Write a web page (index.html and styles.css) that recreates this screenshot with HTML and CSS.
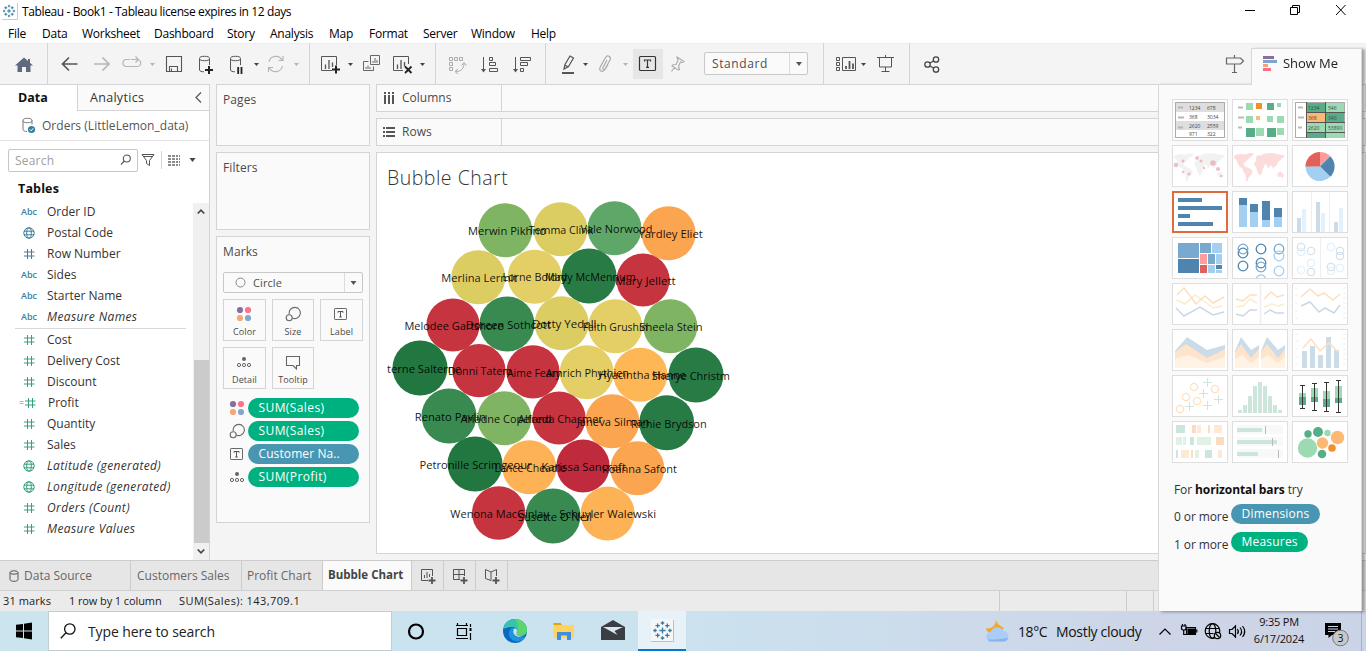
FILE: index.html
```html
<!DOCTYPE html>
<html lang="en">
<head>
<meta charset="utf-8">
<title>Tableau - Book1</title>
<link rel="stylesheet" href="styles.css">
</head>
<body>
<svg class="defs" width="0" height="0">
  <symbol id="hash" viewBox="0 0 14 12"><path d="M4.5 1v10M8.5 1v10M1 4h10.5M1 8h10.5" fill="none" stroke="currentColor"/></symbol>
  <symbol id="globe" viewBox="0 0 14 12"><g fill="none" stroke="currentColor"><circle cx="6" cy="6" r="5.2"/><ellipse cx="6" cy="6" rx="2.3" ry="5.2"/><path d="M1 4.2h10M1 7.8h10"/></g></symbol>
  <symbol id="drop" viewBox="0 0 6 4"><path d="M0 0h6L3 4z" fill="currentColor"/></symbol>
  <symbol id="dots4" viewBox="0 0 16 16"><circle cx="4" cy="4" r="3.1" fill="#8a7099"/><circle cx="12" cy="4" r="3.1" fill="#fb7586"/><circle cx="4" cy="12" r="3.1" fill="#f3a878"/><circle cx="12" cy="12" r="3.1" fill="#84a6cd"/></symbol>
  <symbol id="size" viewBox="0 0 16 16"><g fill="none" stroke="#6a6a6a" stroke-width="1.1"><path d="M4.3 8.2A5.6 5.6 0 1 1 7.3 12"/><circle cx="4.2" cy="11.8" r="3"/></g></symbol>
  <symbol id="label" viewBox="0 0 16 16"><rect x="1.5" y="2.5" width="12" height="11" rx=".6" fill="none" stroke="#6a6a6a"/><path d="M5 6.8V5.5h5v1.3M7.5 5.5v5.500M6.200 11h2.600" fill="none" stroke="#555"/></symbol>
  <symbol id="detail" viewBox="0 0 16 16"><circle cx="8" cy="5" r="2" fill="#666"/><g fill="none" stroke="#666"><circle cx="3" cy="11" r="1.6"/><circle cx="8" cy="11" r="1.600"/><circle cx="13" cy="11" r="1.600"/></g></symbol>
  <symbol id="logo" viewBox="0 0 24 24"><path d="M12 8.500v7M8.500 12h7M12 1.500v4M10 3.500h4M12 18.500v4M10 20.500h4M3.500 10v4M1.500 12h4M20.500 10v4M18.500 12h4M6.500 4v5M4 6.500h5M17.500 4v5M15 6.500h5M6.500 15v5M4 17.500h5M17.500 15v5M15 17.500h5" fill="none" stroke="currentColor" stroke-width="1.500"/></symbol>
  <symbol id="world" viewBox="0 0 50 28"><path d="M1 2l5-1 5 .5 4-1.500 4 .5-1 2-3 2-2 2-2 2-2 2 1 2 2 1 4 2 2 2-1 3-3 3-1 4-1.500-.5-.5-6-2-3-1-3-3-2-2-4-1-3-2-1-2 1zM21 4l2-2 2 .500 5-2 6-.500 6 1 6 1.500 1 1-3 1.500-1 2-2 1-2 4-2 1-1 3-1-3-2-1-2 3-2-4-3 0 1.500 1-2 4-1 4-2 2-2-4-1-4-2-2 0-3 2-1-.500-2zM42 19l3-1 3 3-1 3-2-1-3 0z" fill="currentColor"/></symbol>
</svg>

<header class="titlebar">
  <svg class="app-icon" width="16" height="18" viewBox="0 0 16 18"><path d="M0 17.500h15.500V1" fill="none" stroke="#ccc"/><g color="#1f6f9f"><use href="#logo" x="0" y="2" width="14" height="14"/></g></svg>
  <span class="window-title">Tableau - Book1 - Tableau license expires in 12 days</span>
  <svg class="window-buttons" width="130" height="24" viewBox="1236 0 130 24" fill="none" stroke="#000"><path d="M1245 10.500h10M1336 5l9.500 10M1345.500 5l-9.500 10"/><path d="M1290.500 7.500h7v7h-7zM1292.500 7.500v-2h7v7h-2"/></svg>
</header>

<nav class="menubar">
  <span class="m-file">File</span><span class="m-data">Data</span><span class="m-ws">Worksheet</span><span class="m-db">Dashboard</span><span class="m-story">Story</span><span class="m-an">Analysis</span><span class="m-map">Map</span><span class="m-fmt">Format</span><span class="m-srv">Server</span><span class="m-win">Window</span><span class="m-help">Help</span>
</nav>

<div class="toolbar">
  <div class="tools tools-home">
    <svg width="47" height="41" viewBox="0 43 47 41"><path d="M24 57.500l-9 8h2.500V72h4.500v-5h4v5h4.500v-6.500H33l-3-2.700V59h-2v2z" fill="#5f6a7d"/></svg>
  </div>
  <div class="tools tools-history">
    <svg width="261" height="41" viewBox="48 43 261 41" fill="none">
      <path d="M77.500 64H63M69 57.500L62.500 64l6.500 6.500" stroke="#555" stroke-width="1.700"/>
      <path d="M94 64h14.500M102.500 57.500L109 64l-6.500 6.500" stroke="#b5b5b5" stroke-width="1.700"/>
      <path d="M130 59.500h-3.500a3.500 3.500 0 0 0 0 7h11a3.500 3.500 0 0 0 2-6.200M131 59.500h7M135.500 56.500l3 3-3 3" stroke="#b5b5b5" stroke-width="1.200"/>
      <path d="M150 63h5l-2.500 3zM294 63h5l-2.500 3z" fill="#b5b5b5"/>
      <path d="M166.500 56.500h15v15h-15zM169.500 71v-4.500h8V71M171.500 71v-2.500" stroke="#555" stroke-width="1.100"/>
      <path d="M199.500 59v11c0 1 2 1.800 4.500 1.800M209.500 59v6" stroke="#555"/><ellipse cx="204.500" cy="58.500" rx="5" ry="2.200" stroke="#555"/><path d="M209 66v8M205 70h8" stroke="#222" stroke-width="2"/>
      <path d="M230.500 59v11c0 1 2 1.800 4.500 1.800M240.500 59v6" stroke="#555"/><ellipse cx="235.500" cy="58.500" rx="5" ry="2.200" stroke="#555"/><path d="M238.200 67v7M241.500 67v7" stroke="#222" stroke-width="1.800"/>
      <path d="M254 63h5l-2.500 3z" fill="#444"/>
      <path d="M269 62a7 7 0 0 1 13-2M282.500 66a7 7 0 0 1-13 2M283 56v4.500h-4.500M268.500 72v-4.500h4.500" stroke="#b5b5b5" stroke-width="1.200"/>
    </svg>
  </div>
  <div class="tools tools-sheet">
    <svg width="125" height="41" viewBox="310 43 125 41" fill="none">
      <g stroke="#555"><path d="M332 70.500h-10.500v-14h15V65"/><path d="M325.500 64.500V69M329 60v9M332.500 62.500V67" stroke-width="1.300"/></g>
      <path d="M336 65.500v8M332 69.500h8" stroke="#222" stroke-width="2"/>
      <path d="M348 63h5l-2.500 3zM420 63h5l-2.500 3z" fill="#444"/>
      <g stroke="#666"><path d="M370.500 55.500h9v9h-9zM368.500 61.500h-5v9h10v-4"/><path d="M373 61v2M375 58v5M377 60v3M366 67v2M368 65.500V69M370 67v2"/></g>
      <g stroke="#555"><path d="M403 70.500h-9.500v-14h15V64"/><path d="M397.500 64.500V69M401 60v9M404.500 62v4.500" stroke-width="1.300"/></g>
      <path d="M405 66.500l6.500 6.500M411.500 66.500L405 73" stroke="#222" stroke-width="1.800"/>
    </svg>
  </div>
  <div class="tools tools-sort">
    <svg width="109" height="41" viewBox="436 43 109 41" fill="none">
      <g stroke="#aaa"><path d="M449.500 57.500h3v3h-3zM454.500 57.500h3v3h-3zM459.500 57.500h3v3h-3zM449.500 62.500h3v3h-3zM449.500 67.500h3v3h-3zM456 71.500c5 0 8-3 8-8M458 69l-3 2.500 3 2.500M461.500 65.500l2.500-3 2.500 3"/></g>
      <g stroke="#555"><path d="M483.500 57v13M489.500 57.500h3v3h-3zM489.500 62.500h6v3h-6zM489.500 68.500h8v3h-8z"/><path d="M481 69h5l-2.500 3.500z" fill="#555" stroke="none"/>
      <path d="M515.500 57v13M520.500 57.500h10v3h-10zM520.500 62.500h7v3h-7zM520.500 68.500h3v3h-3z"/><path d="M513 69h5l-2.500 3.500z" fill="#555" stroke="none"/></g>
    </svg>
  </div>
  <div class="tools tools-format">
    <svg width="87" height="41" viewBox="546 43 87 41" fill="none">
      <path d="M564 69l1-4.500 5-8.500 3.500 2-5 8.500zM564.800 65l3.500 2" stroke="#555" stroke-width="1.200"/><path d="M562 73h12" stroke="#555" stroke-width="2"/>
      <path d="M583 63h5l-2.500 3z" fill="#444"/><path d="M623 63h5l-2.500 3z" fill="#b5b5b5"/>
      <path d="M607 60l-4 7.500c-1 2 1 3 2 1.500l5-9c1.500-3.500-2.500-5.500-4.500-2.500l-5 9c-2.500 4.500 2 6.500 4.500 3l3-5" stroke="#aaa" stroke-width="1.200"/>
    </svg>
    <span class="tool-active"><svg width="30" height="30" viewBox="633 49 30 30" fill="none" stroke="#333"><rect x="639.500" y="56.500" width="16" height="14" rx="1" stroke-width="1.200"/><path d="M644.500 61.500V60h6v1.500M647.500 60v7M646 67.300h3" stroke-width="1.200"/></svg></span>
    <svg width="41" height="41" viewBox="663 43 41 41" fill="none" stroke="#aaa"><path d="M677 57l7 4.500-1.500 1-2-.5-2 4 1 3.500-1 .7-6.500-4.200 1-1.200 3-.3 2-4zM674.500 67.500l-3 4" stroke-width="1.100"/></svg>
    <div class="select fit-select"><span>Standard</span><i><svg width="6" height="4"><use href="#drop"/></svg></i></div>
  </div>
  <div class="tools tools-present">
    <svg width="85" height="41" viewBox="824 43 85 41" fill="none" stroke="#555"><path d="M836.500 57.500h3v3h-3zM836.500 62.500h3v3h-3zM836.500 67.500h3v3h-3zM842.500 57.500h13v13h-13z"/><path d="M846 66v3M849.500 61v8M853 63.500V69" stroke-width="1.800"/><path d="M861 63h5l-2.500 3z" fill="#444" stroke="none"/><path d="M877 57.500h17M879.500 58v9h12v-9M885.500 67v5M881.500 71.500h8M885.500 55v2"/></svg>
  </div>
  <div class="tools tools-share">
    <svg width="40" height="41" viewBox="910 43 40 41" fill="none" stroke="#444" stroke-width="1.300"><circle cx="927.500" cy="64.500" r="2.700"/><circle cx="936" cy="59.500" r="2.700"/><circle cx="936" cy="69.500" r="2.700"/><path d="M930 63l3.500-2M930 66l3.500 2"/></svg>
  </div>
  <svg class="guide" width="30" height="41" viewBox="1221 43 30 41" fill="none" stroke="#666" stroke-width="1.200"><path d="M1226.500 58h14l3 3-3 3h-14zM1234.500 55v3M1234.500 64v8.500M1232 72.500h5"/></svg>
</div>

<main class="workspace">
  <aside class="data-pane">
    <div class="pane-tabs"><b>Data</b><span>Analytics<svg width="7" height="11" viewBox="0 0 7 11"><path d="M6 .5L1 5.500l5 5" fill="none" stroke="#555" stroke-width="1.200"/></svg></span></div>
    <div class="source"><svg width="14" height="17" viewBox="0 0 14 17" fill="none" stroke="#777"><ellipse cx="5.500" cy="3.500" rx="4.500" ry="2.200"/><path d="M1 3.500v9c0 1.200 2 2 4 2M10 3.500v4"/><circle cx="9.500" cy="12.500" r="3.600" fill="#3b7f9f" stroke="none"/><path d="M7.800 12.500l1.300 1.300 2.200-2.500" stroke="#fff"/></svg><span>Orders (LittleLemon_data)</span></div>
    <div class="search-row">
      <div class="search"><span>Search</span><svg width="12" height="12" viewBox="0 0 12 12" fill="none" stroke="#555" stroke-width="1.100"><circle cx="6.800" cy="4.500" r="3.500"/><path d="M4.300 7L1 10.500"/></svg></div>
      <svg width="14" height="14" viewBox="0 0 14 14" fill="none" stroke="#555"><path d="M1 1.500h12L8.500 7.500v5l-3-2v-3zM2.500 3.500h9"/></svg>
      <i class="rule"></i>
      <svg class="listicon" width="12" height="11" viewBox="0 0 12 11"><path d="M0 1h12M0 4h12M0 7h12M0 10h12" stroke="#666" stroke-width="1.300" stroke-dasharray="3 1 3 1 2 1 1"/></svg>
      <svg width="7" height="4"><use href="#drop" color="#444"/></svg>
    </div>
    <h2 class="tables">Tables</h2>
    <div class="fields">
      <ul class="dims">
        <li><em>Abc</em><span>Order ID</span></li>
        <li><svg><use href="#globe"/></svg><span>Postal Code</span></li>
        <li><svg><use href="#hash"/></svg><span>Row Number</span></li>
        <li><em>Abc</em><span>Sides</span></li>
        <li><em>Abc</em><span>Starter Name</span></li>
        <li class="gen"><em>Abc</em><span>Measure Names</span></li>
      </ul>
      <ul class="meas">
        <li><svg><use href="#hash"/></svg><span>Cost</span></li>
        <li><svg><use href="#hash"/></svg><span>Delivery Cost</span></li>
        <li><svg><use href="#hash"/></svg><span>Discount</span></li>
        <li class="calc"><svg><use href="#hash"/></svg><span>Profit</span></li>
        <li><svg><use href="#hash"/></svg><span>Quantity</span></li>
        <li><svg><use href="#hash"/></svg><span>Sales</span></li>
        <li class="gen"><svg><use href="#globe"/></svg><span>Latitude (generated)</span></li>
        <li class="gen"><svg><use href="#globe"/></svg><span>Longitude (generated)</span></li>
        <li class="gen"><svg><use href="#hash"/></svg><span>Orders (Count)</span></li>
        <li class="gen"><svg><use href="#hash"/></svg><span>Measure Values</span></li>
      </ul>
      <div class="scrollbar"><svg width="8" height="5" viewBox="0 0 8 5"><path d="M.7 4.500L4 1.200l3.300 3.300" fill="none" stroke="#444" stroke-width="1.600"/></svg><i></i><svg width="8" height="5" viewBox="0 0 8 5"><path d="M.7.500L4 3.800 7.300.5" fill="none" stroke="#444" stroke-width="1.600"/></svg></div>
    </div>
  </aside>

  <section class="cards">
    <div class="card pages">Pages</div>
    <div class="card filters">Filters</div>
    <div class="card marks">
      <h3>Marks</h3>
      <div class="select mark-type"><svg width="11" height="11"><circle cx="5.500" cy="5.500" r="4.500" fill="none" stroke="#888"/></svg><span>Circle</span><i><svg width="7" height="4"><use href="#drop"/></svg></i></div>
      <div class="mark-buttons">
        <div><svg><use href="#dots4"/></svg><span>Color</span></div>
        <div><svg><use href="#size"/></svg><span>Size</span></div>
        <div><svg><use href="#label"/></svg><span>Label</span></div>
        <div><svg><use href="#detail"/></svg><span>Detail</span></div>
        <div><svg viewBox="0 0 16 16"><path d="M1.500 2.500h13v9h-3V15L8 11.500H1.500z" fill="none" stroke="#666" stroke-width="1.100"/></svg><span>Tooltip</span></div>
      </div>
      <ul class="pills">
        <li><svg><use href="#dots4"/></svg><span>SUM(Sales)</span></li>
        <li><svg><use href="#size"/></svg><span>SUM(Sales)</span></li>
        <li><svg><use href="#label"/></svg><span class="dim">Customer Na..</span></li>
        <li><svg><use href="#detail"/></svg><span>SUM(Profit)</span></li>
      </ul>
    </div>
  </section>

  <section class="view">
    <div class="shelf"><div><svg width="12" height="12" viewBox="0 0 12 12"><path d="M2 0v2M2 3v9M6 0v2M6 3v9M10 0v2M10 3v9" stroke="#555" stroke-width="2"/></svg><span class="s-col">Columns</span></div></div>
    <div class="shelf"><div><svg width="12" height="12" viewBox="0 0 12 12"><path d="M0 2h2M3 2h9M0 6h2M3 6h9M0 10h2M3 10h9" stroke="#555" stroke-width="2"/></svg><span class="s-row">Rows</span></div></div>
    <div class="sheet">
      <h1>Bubble Chart</h1>
      <svg class="bubbles" id="bubbles" width="344" height="350" viewBox="387 198 344 350"></svg>
    </div>
  </section>
</main>

<div class="sheet-tabs">
  <span class="t-src"><svg width="10" height="12" viewBox="0 0 10 12" fill="none" stroke="#555"><ellipse cx="5" cy="2.500" rx="4" ry="1.700"/><path d="M1 2.500v7c0 2.400 8 2.400 8 0v-7"/></svg>Data Source</span>
  <span class="t-cust">Customers Sales</span>
  <span class="t-prof">Profit Chart</span>
  <b class="t-bub">Bubble Chart</b>
  <i><svg viewBox="0 0 16 16" fill="none" stroke="#555"><path d="M8 12.500H1.500v-11h11V8M4.500 7v3M7 4v6M9.500 6v3"/><path d="M12 9v7M8.500 12.500h7" stroke-width="1.800"/></svg></i>
  <i><svg viewBox="0 0 16 16" fill="none" stroke="#555"><path d="M8 11.500H1.500v-10h11V8M1.500 6.500h11M7 1.500v10"/><path d="M12 9v7M8.500 12.500h7" stroke-width="1.800"/></svg></i>
  <i><svg viewBox="0 0 16 16" fill="none" stroke="#555"><path d="M7 12.500l-5.500-2v-9L7 4l5.500-2.500V8M7 4v8.500"/><path d="M12 9v7M8.500 12.500h7" stroke-width="1.800"/></svg></i>
</div>
<div class="status"><span class="st-marks">31 marks</span><span class="st-rows">1 row by 1 column</span><span class="st-sum">SUM(Sales): 143,709.1</span><i class="c1"></i><i class="c2"></i><i class="c3"></i></div>

<div class="showme">
  <div class="showme-tab"><svg width="15" height="16" viewBox="0 0 15 16"><path d="M0 0h11v3H0z" fill="#8a6d9b"/><path d="M0 4h14v3H0z" fill="#7fa3cf"/><path d="M0 8h5v3H0z" fill="#f3a37c"/><path d="M0 12h8v3H0z" fill="#fb6f83"/></svg><span>Show Me</span></div>
  <div class="showme-body">
    <div class="thumbs">
      <svg viewBox="0 0 56 42"><rect x="3.500" y="3.500" width="49" height="35" fill="#fff" stroke="#aaa"/><path d="M4 4h48v9H4zM4 22h48v9H4z" fill="#dedede"/><path d="M6 8.500h5M6 18.500h6M6 28.500h5" stroke="#b5b5b5" stroke-width="2"/><g class="nums"><text x="17" y="10.500">1234</text><text x="35" y="10.500">678</text><text x="17" y="20">368</text><text x="35" y="20">3034</text><text x="17" y="29">2620</text><text x="35" y="29">2559</text><text x="17" y="37">971</text><text x="35" y="37">322</text></g></svg>
      <svg viewBox="0 0 56 42"><path d="M6 8.500h5M6 18.500h6M6 28.500h4" stroke="#bbb" stroke-width="2"/><path d="M14 4h7v7h-7zM45 4h4v4h-4zM14 17h7v7h-7zM35 17h6v6h-6zM45 17h7v7h-7zM24 29h8v8h-8zM45 29h7v7h-7z" fill="#9cdab3"/><path d="M35 4h7v7h-7zM14 29h9v9h-9zM35 29h9v9h-9z" fill="#56ad88"/><path d="M24 4h6v6h-6z" fill="#f58f2b"/><path d="M24 17h4v4h-4z" fill="#fdba78"/></svg>
      <svg viewBox="0 0 56 42"><rect x="3.500" y="3.500" width="49" height="35" fill="#fff" stroke="#aaa"/><path d="M14 4h19v35H14zM33 14h19v9H33z" fill="#56ad88"/><path d="M33 4h19v9H33zM14 24h38v9H14zM33 34h19v5H33z" fill="#9cdab3"/><path d="M14 14h19v9H14z" fill="#fdb873"/><path d="M14.500 3v36M33.500 3v36M14 13.500h39M14 23.500h39M14 33.500h39" stroke="#555"/><path d="M6 8.500h5M6 18.500h6M6 28.500h4" stroke="#bbb" stroke-width="2"/><g class="nums"><text x="16" y="10.500">1234</text><text x="36" y="10.500">546</text><text x="16" y="21">368</text><text x="36" y="21">340</text><text x="16" y="31">2620</text><text x="36" y="31">53890</text></g></svg>
      <svg viewBox="0 0 56 42"><g color="#f2f2f2"><use href="#world" x="2" y="8" width="52" height="29"/></g><g fill="#e9a9b3" opacity=".75"><circle cx="4" cy="20" r="2.300"/><circle cx="11" cy="16" r="1.500"/><circle cx="25" cy="13" r="1.800"/><circle cx="29" cy="16" r="1.500"/><circle cx="41" cy="18" r="2.800"/><circle cx="46" cy="24" r="2"/><circle cx="17" cy="29" r="1.500"/><circle cx="11" cy="27" r="1.200"/><circle cx="32" cy="23" r="1.200"/><circle cx="49" cy="31" r="1.200"/></g></svg>
      <svg viewBox="0 0 56 42"><g color="#fcdcdb"><use href="#world" x="2" y="8" width="52" height="29"/></g></svg>
      <svg viewBox="0 0 56 42"><path d="M28 21.500V7a14.500 14.500 0 0 1 10.300 4.200z" fill="#ff9d9a"/><path d="M28 21.500L38.300 11.200a14.500 14.500 0 0 1 0 20.600z" fill="#4e84ae"/><path d="M28 21.500l10.300 10.300A14.500 14.500 0 0 1 13.500 21z" fill="#a3cff0"/><path d="M28 21.500H13.500A14.500 14.500 0 0 1 28 7z" fill="#e1605a"/></svg>
      <svg class="picked" viewBox="0 0 56 42"><path d="M6 7h24v4H6zM6 15h44v4H6zM6 23h12v4H6zM6 31h35v4H6z" fill="#4e84ae"/></svg>
      <svg viewBox="0 0 56 42"><path d="M7 7h8v7H7zM18 13h8v8h-8zM30 10h8v19h-8zM42 17h8v9h-8z" fill="#4e84ae"/><path d="M7 14h8v22H7zM18 21h8v15h-8zM30 29h8v7h-8zM42 26h8v10h-8z" fill="#a3cff0"/></svg>
      <svg viewBox="0 0 56 42"><path d="M19.500 1v40M37.500 1v40" stroke="#eee"/><path d="M5 27h4v14H5zM24 11h4v30h-4zM42 31h4v10h-4z" fill="#ccdbe8"/><path d="M10 18h4v23h-4zM29 22h4v19h-4zM47 17h4v24h-4z" fill="#e3f1fc"/></svg>
      <svg viewBox="0 0 56 42"><path d="M6 6h21v15H6zM28 6h11v10H28zM36 17h7v10h-7z" fill="#7aa9cf"/><path d="M6 22h21v14H6zM44 28h6v4h-6z" fill="#4e84ae"/><path d="M40 6h10v10H40zM44 17h6v10h-6zM36 28h7v8h-7zM44 33h6v3h-6z" fill="#a3cff0"/><path d="M28 17h7v10h-7z" fill="#ff9d9a"/><path d="M28 28h7v8h-7z" fill="#e1605a"/></svg>
      <svg viewBox="0 0 56 42" fill="none" stroke-width="1.300"><g stroke="#4e84ae"><circle cx="11" cy="16" r="4.800"/><circle cx="11" cy="29" r="4.800"/><circle cx="29" cy="12" r="4.800"/><circle cx="29" cy="26" r="4.800"/></g><g stroke="#7aa9cf"><circle cx="11" cy="12" r="4.800"/><circle cx="47" cy="12" r="4.800"/><circle cx="29" cy="30" r="4.800"/></g><g stroke="#a3cff0"><circle cx="47" cy="19" r="4.800"/><circle cx="47" cy="34" r="4.800"/><path d="M24.500 41a4.800 4.800 0 0 1 9 0"/></g></svg>
      <svg viewBox="0 0 56 42" fill="none"><path d="M28.500 1v40" stroke="#eee"/><g stroke="#ccdbe8"><circle cx="9" cy="10" r="3.800"/><circle cx="19" cy="14" r="3.800"/><circle cx="19" cy="35" r="3.800"/><circle cx="48" cy="14" r="3.800"/><circle cx="48" cy="19" r="3.800"/><circle cx="39" cy="30" r="3.800"/></g><g stroke="#deeefa"><circle cx="9" cy="15" r="3.800"/><circle cx="19" cy="26" r="3.800"/><circle cx="9" cy="33" r="3.800"/><circle cx="39" cy="10" r="3.800"/><circle cx="39" cy="34" r="3.800"/><circle cx="48" cy="31" r="3.800"/></g></svg>
      <svg class="faint" viewBox="0 0 56 42"><path d="M5 17l8 4 10-9 10 7 8 6 10-2" class="y"/><path d="M5 12l7-7 12 16 9-8 8 7 11-6" class="o"/><path d="M4 25l8 8 16-9 13 8 11-3" class="b"/></svg>
      <svg class="faint" viewBox="0 0 56 42"><path d="M28.500 1v40" stroke="#eee"/><path d="M4 24l7-1 7-7 7 4M32 24l8-3 6 2 6-2" class="y"/><path d="M4 16l7 2 7-6 7 0M32 16l7-7 6 5 7-2" class="o"/><path d="M4 31l7 2 7-6h7M32 31l6-4 6 3h8" class="b"/></svg>
      <svg class="faint" viewBox="0 0 56 42"><path d="M3 5h3M3 12h3M3 20h3M3 28h3M3 35h3M51 5h3M51 10h3M51 15h3M51 20h3M51 25h3M51 30h3M51 35h3" class="tick"/><path d="M9 14l9-8 8 7 6-3 9 7 7-6" class="o"/><path d="M9 23l9-4 9 10 6-4 9 5 6-8" class="b"/></svg>
      <svg viewBox="0 0 56 42"><path d="M3 22L15 8l20 13 18-5v23H3z" fill="#ccdbe8"/><path d="M3 23l11-8 21 14 18-9v19H3z" fill="#fde4cb"/><path d="M3 30l13-4 19 8 18-6v11H3z" fill="#fff3e6"/></svg>
      <svg viewBox="0 0 56 42"><path d="M3 22L9 8l10 13 8-5v23H3zM29 22l6-14 11 13 7-5v23H29z" fill="#ccdbe8"/><path d="M3 23l6-8 10 14 8-9v19H3zM29 23l6-8 11 14 7-9v19H29z" fill="#fde4cb"/><path d="M3 30l7-4 9 8 8-6v11H3zM29 30l7-4 10 8 7-6v11H29z" fill="#fff3e6"/></svg>
      <svg class="faint" viewBox="0 0 56 42"><path d="M3 5h3M3 12h3M3 20h3M3 28h3M3 35h3M51 5h3M51 10h3M51 15h3M51 20h3M51 25h3M51 30h3M51 35h3" class="tick"/><path d="M10 22h5v17h-5zM18 17h5v22h-5zM26 26h5v13h-5zM34 8h5v31h-5zM42 21h5v18h-5z" fill="#ccdbe8"/><path d="M11 19l8-9 9 12 9-8 9 9" class="o"/></svg>
      <svg viewBox="0 0 56 42" fill="none"><g stroke="#fde0c3" stroke-width="1.300"><circle cx="8" cy="34" r="3.600"/><circle cx="14" cy="22" r="3.600"/><circle cx="22" cy="12" r="3.600"/><circle cx="25" cy="26" r="3.600"/><circle cx="43" cy="14" r="3.600"/></g><path d="M35.500 3v9M31 7.500h9M31.500 14v9M27 18.500h9M17.500 27v9M13 31.500h9M35.500 26v9M31 30.500h9M46.500 20v9M42 24.500h9" stroke="#cce6dc"/></svg>
      <svg viewBox="0 0 56 42"><path d="M6 35h4v3H6zM11 30h4v8h-4zM16 21h4v17h-4zM21 11h4v27h-4zM26 7h4v31h-4zM31 11h4v27h-4zM36 21h4v17h-4zM41 30h4v8h-4zM46 35h4v3h-4z" fill="#cce6dc"/></svg>
      <svg viewBox="0 0 56 42"><path d="M7 18h7v4H7zM19 13h7v9h-7zM31 16h7v8h-7zM43 11h7v12h-7z" fill="#9cdab3"/><path d="M7 22h7v8H7zM19 22h7v5h-7zM31 24h7v8h-7zM43 23h7v5h-7z" fill="#56ad88"/><path d="M10.500 10v23M22.500 8v27M34.500 7v29M46.500 5v32M8 10.500h5M8 33.500h5M20 8.500h5M20 35.500h5M32 7.500h5M32 36.500h5M44 5.500h5M44 37.500h5" stroke="#333"/></svg>
      <svg viewBox="0 0 56 42"><path d="M4 4h9v8H4zM18 16h4v8h-4zM33 29h7v8h-7zM4 29h2v8H4z" fill="#cce6dc"/><path d="M4 16h6v8H4zM11 16h3v8h-3zM25 16h14v8H25zM23 29h4v8h-4z" fill="#e0f2e6"/><path d="M20 4h4v8h-4zM36 4h2v8h-2zM44 16h8v8h-8zM19 29h2v8h-2z" fill="#fcdcc0"/><path d="M25 4h4v8h-4zM42 4h8v8h-8zM9 29h8v8H9zM46 29h4v8h-4z" fill="#fee9d6"/></svg>
      <svg viewBox="0 0 56 42"><path d="M5 4h46v9H5zM5 16h46v9H5zM5 28h46v9H5z" fill="#f8f8f8"/><path d="M5 7h25v4H5zM5 19h40v4H5zM5 31h21v4H5z" fill="#cce6dc"/><path d="M33.500 5v8M40.500 17v8M46.500 29v8" stroke="#bbb"/></svg>
      <svg viewBox="0 0 56 42"><g fill="#56ad88"><circle cx="16" cy="13" r="3.700"/><circle cx="26" cy="11" r="5"/><circle cx="30" cy="33" r="4.300"/></g><g fill="#9cdab3"><circle cx="15.500" cy="27" r="9.700"/><circle cx="35.500" cy="12" r="3.200"/></g><g fill="#fdb873"><circle cx="45.500" cy="16.500" r="6.700"/><circle cx="30.500" cy="22" r="5.700"/></g><circle cx="40" cy="27" r="3.800" fill="#f58f2b"/></svg>
    </div>
    <p class="try">For <b>horizontal bars</b> try</p>
    <p class="need"><span>0 or more</span><em class="dim">Dimensions</em></p>
    <p class="need"><span>1 or more</span><em>Measures</em></p>
  </div>
</div>

<footer class="taskbar">
  <svg class="start" width="48" height="40" viewBox="0 611 48 40"><path d="M16 624.800l7-.9v6.600h-7zM24 623.700l8-1.200v8h-8zM16 631.500h7v6.600l-7-.9zM24 631.500h8v8l-8-1.200z"/></svg>
  <div class="tb-search"><svg width="16" height="16" viewBox="0 0 16 16" fill="none" stroke="#111" stroke-width="1.300"><circle cx="9.800" cy="6" r="5.200"/><path d="M6 9.800L.8 15.200"/></svg><span>Type here to search</span></div>
  <svg class="apps" width="246" height="40" viewBox="392 611 246 40">
    <circle cx="416" cy="631.500" r="7" fill="none" stroke="#000" stroke-width="2.200"/>
    <path d="M457.500 628.500h9v7h-9zM456 625.500h12M457.500 623v2.500M466.500 623v2.500M456 638.500h12M470.500 624v3M470.500 633v7" fill="none" stroke="#000" stroke-width="1.200"/><path d="M469.500 628h2v3h-2z"/>
    <circle cx="515" cy="631" r="12" fill="#0c67c4"/><path d="M503.300 629c1-6.500 6-10 11.700-10 7 0 12 5 12 11 0 4-3.500 6-7 6-3 0-4.500-1.300-3.500-3 1.200-2.200 0-6-4-6-4 0-7.500 1-9.200 2z" fill="#38c2b0"/><path d="M515 619c7 0 12 5 12 11 0 4-3.500 6-7 6-3 0-4.500-1.300-3.500-3 2.500-4 2-9-1.500-14z" fill="#5bd56e"/><path d="M511.500 628c-5 4-2.500 13 6 13.500 4-.5 6.500-2.500 8-5.500-7 3.500-13-.500-10.500-6.500 0-1-2-2-3.500-1.500z" fill="#1b95dc"/><path d="M516.500 633c1.500-3-.5-4.800-2.500-4.300-2.500 4.300 2 9 7 8.300l5-1.500c-5 2-10.500.7-9.500-2.500z" fill="#cde5ee"/>
    <path d="M553.500 623h7l2 2H574v13h-20.500z" fill="#ffd45e"/><path d="M553.500 623h7l1.500 2h-8.500z" fill="#e2a119"/><path d="M557 640v-8h14v8h-4v-4.500h-6V640z" fill="#3f8fdc"/>
    <path d="M601 627l12-7 12 7v13h-24z" fill="#3a3d42"/><path d="M603 627h20l-8.500 4 3 4z" fill="#d6e7f1"/>
  </svg>
  <div class="tb-active"><svg width="23" height="23" viewBox="0 0 24 24"><rect width="24" height="24" fill="#f6f6f6"/><path d="M0 23.500h23.500V1" fill="none" stroke="#bbb"/><g color="#357ba6"><use href="#logo" x="1" y="1" width="22" height="22"/></g></svg></div>
  <div class="weather"><svg width="26" height="24" viewBox="0 0 26 24"><path d="M11 1c1 4 4 6 8 8l-6 6-9-1C2 12 1 10 1 9c4 2 10-2 10-8z" fill="#f5a623"/><path d="M6.500 22.500a5 5 0 0 1-.5-10 6.500 6.500 0 0 1 12-.5 5.300 5.300 0 0 1 1 10.500z" fill="#a9cdf8"/><path d="M2.500 20.500c6 0 15 0 21-2-1 2.500-2.500 4-5 4h-12c-2 0-3-.5-4-2z" fill="#86b2f0"/></svg><span class="deg">18°C</span><span class="sky">Mostly cloudy</span></div>
  <svg class="tray" width="94" height="40" viewBox="1156 611 94 40" fill="none" stroke="#000" stroke-width="1.200"><path d="M1159.500 634.500l5.500-5.500 5.500 5.500"/><path d="M1186.500 627.500h9v7h-9z"/><path d="M1188 629h6.500v4.500h-6.500z" fill="#000"/><path d="M1196.800 629.500v3M1181.500 626h4.500v2.500c0 2-4.500 2-4.500 0zM1182.500 624v2M1185 624v2M1183.700 630v4.500h3"/><circle cx="1212.500" cy="631" r="7.300"/><ellipse cx="1212.500" cy="631" rx="3.300" ry="7.300"/><path d="M1205.500 628.500h14M1205.500 633.500h8"/><circle cx="1217.500" cy="635.500" r="3.200" fill="#cdd6e8"/><path d="M1215.500 633.500l4 4"/><path d="M1229.500 629.500h2.500l3.500-3.500v11l-3.500-3.500h-2.500zM1237.500 629c1 1.500 1 3.500 0 5M1240 627.500c2 2.500 2 5.500 0 8M1242.500 626c2.800 3.500 2.800 7.500 0 11"/></svg>
  <div class="clock"><span class="time">9:35 PM</span><span class="date">6/17/2024</span></div>
  <svg class="notes" width="56" height="40" viewBox="1310 611 56 40"><path d="M1325 623h16v12h-9l-3.500 3v-3h-3.500z"/><path d="M1328 626.500h10M1328 629h10M1328 631.500h7" stroke="#cdd5e7"/><circle cx="1340.500" cy="638" r="7.800" fill="#c6c8cc" stroke="#777"/><text x="1337.600" y="641.800" class="badge">3</text><path d="M1361.500 611v40" stroke="#aab0c0"/></svg>
</footer>
<script src="chart.js"></script>
</body>
</html>
```

FILE: styles.css
```css
* { box-sizing: border-box; }
html, body { margin: 0; height: 651px; overflow: hidden; }
body { display: flex; flex-direction: column; position: relative; width: 1366px; background: #f4f4f4; font-family: "Open Sans", "Noto Sans", sans-serif; font-size: 12px; color: #333; }
ul { margin: 0; padding: 0; list-style: none; }
h1, h2, h3, p { margin: 0; font-weight: 400; }
i, em { font-style: normal; }
svg { flex: none; display: block; }
.defs { position: absolute; }
span, b { white-space: nowrap; }

.titlebar { display: flex; align-items: center; height: 24px; background: #fff; padding-left: 2px; flex: none; }
.app-icon { margin-bottom: 2px; }
.window-title { margin-left: 4px; margin-top: -1px; color: #000; font-size: 12px; letter-spacing: -.38px; }
.window-buttons { margin-left: auto; }

.menubar { display: flex; align-items: center; height: 19px; background: #fff; padding-left: 8px; color: #000; flex: none; font-size: 12px; letter-spacing: -.25px; }
.menubar span { line-height: 18px; }
.m-file { width: 34px; } .m-data { width: 40px; } .m-ws { width: 72px; } .m-db { width: 73px; } .m-story { width: 43px; } .m-an { width: 59px; } .m-map { width: 40px; } .m-fmt { width: 54px; } .m-srv { width: 48px; } .m-win { width: 60px; }

.toolbar { display: flex; height: 41px; flex: none; background: #f4f4f4; border-top: 1px solid #eee; }
.tools { display: flex; align-items: center; height: 41px; margin-top: -1px; position: relative; }
.tools + .tools { border-left: 1px solid #d4d4d4; }
.tools-format { width: 278px; }
.tool-active { background: #e6e6e6; }
.guide { margin: -1px 0 0 271px; }
.select { display: flex; align-items: center; border: 1px solid #c8c8c8; border-radius: 2px; background: #fafafa; color: #4e4e4e; }
.select i { display: flex; align-items: center; justify-content: center; align-self: stretch; border-left: 1px solid #dcdcdc; margin-left: auto; width: 18px; color: #555; }
.fit-select { width: 104px; height: 23px; padding-left: 7px; font-size: 12px; letter-spacing: .6px; }

.workspace { display: flex; gap: 6px; height: 476px; flex: none; }
.data-pane { width: 210px; background: #fff; border-right: 1px solid #d4d4d4; border-top: 1px solid #d4d4d4; display: flex; flex-direction: column; }
.pane-tabs { display: flex; height: 26px; line-height: 25px; font-size: 13px; flex: none; }
.pane-tabs b { width: 77px; padding-left: 18px; color: #111; font-size: 12.500px; }
.pane-tabs span { flex: 1; display: flex; align-items: center; justify-content: space-between; padding: 0 7px 0 12px; border: solid #d4d4d4; border-width: 0 0 1px 1px; background: #fafafa; font-size: 12.500px; letter-spacing: .3px; }
.source { display: flex; align-items: center; gap: 6px; height: 30px; border-bottom: 1px solid #e2e2e2; padding: 0 0 1px 22px; color: #555; flex: none; font-size: 12px; letter-spacing: .03px; }
.search-row { display: flex; align-items: center; height: 38px; padding-left: 8px; flex: none; }
.search { display: flex; align-items: center; justify-content: space-between; width: 130px; height: 23px; border: 1px solid #c6c6c6; border-radius: 2px; padding: 0 5px 0 6px; color: #a0a0a0; letter-spacing: .2px; margin-right: 3px; }
.rule { width: 1px; height: 18px; background: #d4d4d4; margin: 0 6px; }
.listicon { margin-right: 9px; }
.tables { height: 22px; line-height: 19px; padding-left: 18px; font-size: 12.500px; font-weight: 700; color: #111; letter-spacing: .15px; flex: none; }
.fields { position: relative; flex: 1; }
.fields ul { padding-left: 18px; }
.fields li { display: flex; align-items: center; height: 21px; letter-spacing: 0; }
.fields li svg { width: 14px; height: 12px; margin: 0 10px 0 5px; }
.fields li em { width: 29px; padding-left: 3px; font-size: 9px; font-weight: 600; color: #3e7e9d; }
.dims { color: #3e7e9d; } .meas { color: #35a07a; }
.fields li span { color: #333; }
.fields .gen span { font-style: italic; letter-spacing: .37px; }
.meas::before { content: ""; display: block; height: 1px; margin: 1px 23px 0 -3px; background: #d8d8d8; }
.calc::before { content: "="; width: 5px; margin-right: -5px; margin-left: 1px; font-size: 9px; }
.scrollbar { position: absolute; right: 0; top: 2px; bottom: 0; width: 16px; background: #f0f0f0; display: flex; flex-direction: column; align-items: center; padding: 6px 0; }
.scrollbar i { width: 15px; height: 183px; background: #cbcbcb; margin: 146px 0 6px; }

.cards { width: 154px; display: flex; flex-direction: column; gap: 6px; }
.card { background: #fafafa; border: 1px solid #d4d4d4; padding: 6px; color: #4a4a4a; letter-spacing: .1px; line-height: 17px; }
.pages { height: 62px; } .filters { height: 78px; } .marks { height: 287px; }
.marks h3 { font-size: 12px; line-height: 17px; }
.mark-type { width: 140px; height: 21px; margin-top: 12px; padding-left: 11px; gap: 7px; font-size: 11px; }
.mark-buttons { display: grid; grid-template-columns: 43px 42px 43px; gap: 6px; margin-top: 6px; }
.mark-buttons div { border: 1px solid #d4d4d4; height: 42px; display: flex; flex-direction: column; align-items: center; padding-top: 6px; }
.mark-buttons svg { width: 16px; height: 16px; margin-left: -1px; }
.mark-buttons span { font-size: 9px; line-height: 12px; margin-top: 4px; }
.pills { margin-top: 9px; display: flex; flex-direction: column; gap: 3px; }
.pills li { display: flex; height: 20px; align-items: center; padding-left: 6px; gap: 3px; }
.pills svg { width: 16px; height: 16px; }
.pills span, .need em { background: #00b180; color: #fff; border-radius: 10px; height: 20px; line-height: 19px; padding: 0 10.500px; font-size: 12px; letter-spacing: .4px; }
.pills span { width: 111px; }
.pills .dim, .need .dim { background: #4996b2; }
.pills .dim { letter-spacing: .1px; }

.view { flex: 1; display: flex; flex-direction: column; gap: 6px; }
.shelf { height: 28px; border: 1px solid #d4d4d4; background: #fafafa; display: flex; }
.shelf div { width: 125px; border-right: 1px solid #d4d4d4; display: flex; align-items: center; gap: 7px; padding: 0 0 1px 6px; color: #4a4a4a; }
.sheet { height: 402px; border: 1px solid #d4d4d4; background: #fff; padding: 10px 0 0 10px; }
.sheet h1 { font-size: 19.500px; line-height: 29px; font-weight: 300; color: #333; letter-spacing: .5px; height: 35px; }
.bubbles text { font-family: "Open Sans", "Noto Sans", sans-serif; font-size: 10.800px; fill: #000; fill-opacity: .9; }

.sheet-tabs { display: flex; height: 31px; border-top: 1px solid #ccc; border-bottom: 1px solid #d0d0d0; background: #e6e6e6; flex: none; line-height: 29px; color: #666; }
.sheet-tabs > * { border-right: 1px solid #ccc; padding-left: 6px; display: flex; align-items: center; }
.t-src { width: 131px; gap: 5px; padding-left: 9px !important; } .t-cust { width: 111px; } .t-prof { width: 81px; padding-left: 5px !important; } .t-bub { width: 89px; background: #fafafa; color: #444; padding: 0 0 2px 5px !important; font-size: 11.500px; }
.sheet-tabs i { width: 32px; padding-left: 8px; }
.sheet-tabs i svg { width: 16px; height: 16px; }
.status { display: flex; align-items: center; height: 20px; background: #ebebeb; padding-left: 3px; flex: none; font-size: 11px; color: #222; }
.status span { padding-bottom: 1px; }
.st-marks { width: 66px; } .st-rows { width: 110px; letter-spacing: -.1px; } .st-sum { width: 820px; letter-spacing: .45px; }
.st-marks { letter-spacing: .1px; }
.st-sum { letter-spacing: .43px; }
.status .st-sum { letter-spacing: 0.42px; font-size: 11px; }
.status i { height: 20px; border-left: 1px solid #ccc; }
.c1 { width: 127px; } .c2 { width: 27px; }

.showme { position: absolute; left: 1158px; top: 48px; width: 208px; height: 563px; display: flex; flex-direction: column; filter: drop-shadow(3px 1px 1.500px rgba(0,0,0,.35)); overflow: hidden; padding-right: 4px; }
.showme-tab { align-self: flex-end; width: 111px; height: 37px; margin-bottom: -1px; z-index: 1; border: solid #d8d8d8; border-width: 1px 1px 0 1px; background: #fafafa; display: flex; align-items: center; gap: 5px; padding: 0 0 6px 11px; font-size: 13px; letter-spacing: -.05px; color: #222; }
.showme-tab span { margin-top: -2px; }
.showme-body { flex: 1; border: solid #d8d8d8; border-width: 1px 1px 0; background: #fafafa; padding: 14px 13px 0; }
.thumbs { display: grid; grid-template-columns: repeat(3, 56px); gap: 4px; }
.thumbs svg { width: 56px; height: 42px; background: #fff; outline: 1px solid #dedede; outline-offset: -1px; }
.thumbs .picked { outline: 2px solid #dd6b3d; outline-offset: -2px; }
.nums text { font-family: "Open Sans", sans-serif; font-size: 5px; fill: #444; }
.faint path { fill: none; stroke-width: 1.500; }
.faint path[fill] { fill: #ccdbe8; }
.faint .tick { stroke: #eee; stroke-width: 1; }
.faint .o { stroke: #fddfc0; } .faint .y { stroke: #fdeccb; } .faint .b { stroke: #c9d8e6; }
.try { margin: 17px 0 0 2px; line-height: 20px; font-size: 12px; height: 24px; letter-spacing: -.1px; }
.try b { color: #111; }
.need { display: flex; align-items: center; margin: 0 0 8px 2px; height: 20px; gap: 3px; }
.need span { padding-top: 4px; width: 54px; letter-spacing: -.1px; }
.need em { letter-spacing: .2px; }

.taskbar { display: flex; height: 40px; background: linear-gradient(90deg, #cae5ee, #cbe2ef 50%, #cdd5e7 85%, #cbd3e6); flex: none; align-items: center; color: #111; }
.tb-search { width: 344px; height: 40px; border: 1px solid #c2cdd2; background: #fff; display: flex; align-items: center; gap: 12px; padding-left: 11px; font-size: 14px; color: #222; letter-spacing: -.1px; }
.tb-active { width: 48px; height: 40px; background: #e6f1f8; border-bottom: 2px solid #0078d7; display: flex; align-items: center; justify-content: center; }
.weather { display: flex; align-items: center; margin-left: 299px; width: 171px; font-size: 14px; }
.deg { margin-left: 7px; width: 38px; letter-spacing: -.4px; }
.sky { letter-spacing: -.32px; }
.clock { display: flex; flex-direction: column; align-items: center; width: 60px; font-size: 11px; line-height: 17px; letter-spacing: -.2px; margin: -2px 1px 0 -1px; }
.badge { font-family: "Open Sans", sans-serif; font-size: 10.500px; fill: #111; }
```

FILE: chart.js
```js
// name, label start and end, circle centre x/y, radius, colour
const marks = [
  ["Merwin Pikhno", 468, 546, 505.3, 230.3, 27, "#7fb463"],
  ["Temma Clink", 528.7, 593.3, 560.5, 229.3, 27, "#dccd63"],
  ["Vale Norwood", 580.5, 652.5, 614.5, 228.3, 27, "#5fa768"],
  ["Yardley Eliet", 638.5, 702.8, 668.6, 233.3, 27, "#fba551"],
  ["Merlina Lermit", 441.3, 517.3, 478.3, 277.3, 27, "#dccd63"],
  ["Lorne Boldry", 502.5, 567, 534.7, 276.7, 27, "#e4ce66"],
  ["Mady McMennum", 545, 635.7, 589, 276, 27.5, "#287b45"],
  ["Mary Jellett", 615, 675.7, 643, 280, 26.6, "#c5343f"],
  ["Melodee Gartshore", 404.5, 503.3, 453, 325, 26.6, "#c5343f"],
  ["Doreen Sothcott", 465.7, 550.7, 507, 324, 27.5, "#388a51"],
  ["Dotty Yedall", 532, 596.5, 561.7, 323.3, 27, "#dccd63"],
  ["Faith Grushin", 582.7, 648, 615.3, 326.3, 27, "#e4ce66"],
  ["Sheela Stein", 639.3, 702.7, 670.3, 326.3, 27, "#7fb463"],
  ["terne Salterne", 387, 461, 420, 368, 27.5, "#22763f"],
  ["Donni Tatem", 448, 512, 479, 370.7, 26.6, "#c5343f"],
  ["Aime Feary", 507, 561, 533, 371.8, 26.6, "#c5343f"],
  ["Amrich Phythien", 545.7, 629, 586.7, 372.3, 27, "#e4ce66"],
  ["Hyacintha Hanne", 598.5, 686, 640.3, 374.7, 27, "#fdb755"],
  ["Sherye Christm", 651.7, 730, 696, 375, 27.5, "#287b45"],
  ["Renato Pavlin", 414.7, 486, 449, 416, 27.5, "#388a51"],
  ["Ariadne Copeland", 460.5, 551.5, 504.3, 418.3, 27, "#7fb463"],
  ["Alfreda Chasmer", 518, 602.7, 559, 418, 26.6, "#c5343f"],
  ["Janeva Silman", 576.7, 649.3, 612.3, 421.3, 27, "#fba551"],
  ["Richie Brydson", 631, 706.7, 666.7, 422.8, 27.5, "#287b45"],
  ["Petronille Scrimgeour", 419.5, 531.7, 475, 464, 27.5, "#22763f"],
  ["Lance Cheadle", 494.5, 566, 529.3, 467.3, 27, "#fdb255"],
  ["Karissa Sancraft", 541.3, 626, 583, 466, 26.6, "#bf2a3c"],
  ["Roanna Safont", 602, 677, 637.3, 468.3, 27, "#fba551"],
  ["Wenona MacGinlay", 450.3, 549, 498.7, 513, 26.7, "#c5343f"],
  ["Susette O'Neil", 517.7, 592, 553, 516, 27.5, "#388a51"],
  ["Schuyler Walewski", 559.3, 656, 607.6, 513.6, 27, "#fdb255"],
];

const svg = document.getElementById("bubbles");
function add(tag, attrs, text) {
  const el = document.createElementNS("http://www.w3.org/2000/svg", tag);
  for (const key in attrs) el.setAttribute(key, attrs[key]);
  if (text) el.textContent = text;
  svg.appendChild(el);
}
for (const [, , , cx, cy, r, fill] of marks) add("circle", { cx, cy, r, fill });
for (const [name, start, end, , cy] of marks) {
  add("text", { x: start, y: cy + 4.7, textLength: end - start, lengthAdjust: "spacingAndGlyphs" }, name);
}
```
